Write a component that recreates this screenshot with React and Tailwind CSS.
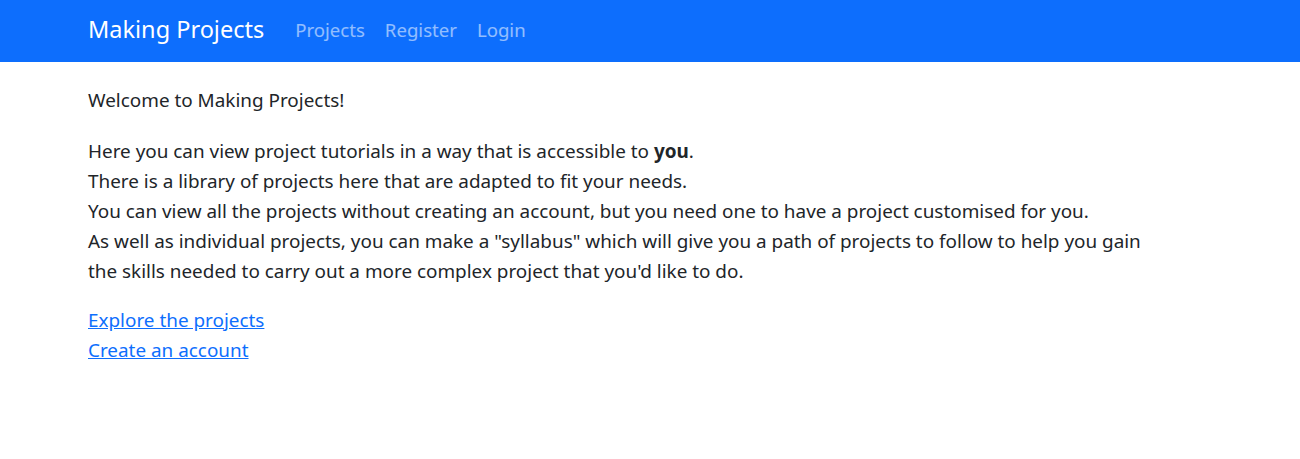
import React from "react";

export default function App() {
  return (
    <div className="min-h-screen bg-white text-[#212529] font-['Noto_Sans',sans-serif]">
      <nav className="h-[62px] bg-[#0d6efd] flex items-center px-[88px] pb-[2px]">
        <a href="#" className="text-[23.5px] text-white mr-[31px] leading-none">
          Making Projects
        </a>
        <div className="flex items-center gap-[20px] text-[18.6px] text-white/55">
          <a href="#">Projects</a>
          <a href="#">Register</a>
          <a href="#">Login</a>
        </div>
      </nav>

      <main className="px-[88px] pt-[23px] text-[18.9px] leading-[30px] max-w-[1250px]">
        <p className="mb-[21px]">Welcome to Making Projects!</p>
        <p className="mb-[19px]">
          Here you can view project tutorials in a way that is accessible to <b>you</b>.
          <br />
          There is a library of projects here that are adapted to fit your needs.
          <br />
          You can view all the projects without creating an account, but you need one to have a project customised for you.
          <br />
          As well as individual projects, you can make a "syllabus" which will give you a path of projects to follow to help you gain the skills needed to carry out a more complex project that you'd like to do.
        </p>
        <div className="flex flex-col items-start">
          <a href="#" className="text-[#0d6efd] underline">Explore the projects</a>
          <a href="#" className="text-[#0d6efd] underline">Create an account</a>
        </div>
      </main>
    </div>
  );
}
